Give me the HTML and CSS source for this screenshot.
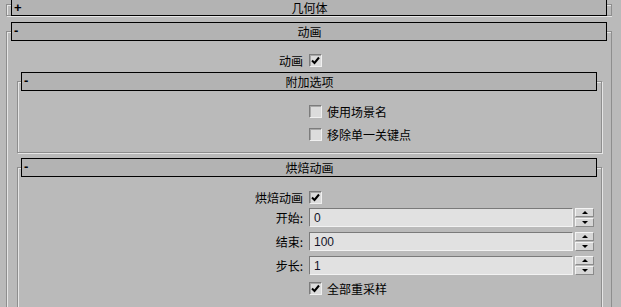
FILE: index.html
```html
<!DOCTYPE html>
<html lang="zh-CN">
<head>
    <meta charset="UTF-8">
    <title>动画</title>
    <link rel="stylesheet" href="styles.css">
</head>
<body>
    <div class="panel">

        <div class="rollout closed">
            <div class="rollout-head"><span class="toggle">+</span><span class="title">几何体</span></div>
        </div>

        <div class="rollout outer">
            <div class="rollout-head"><span class="toggle">-</span><span class="title">动画</span></div>

            <div class="form-row check-row first-row">
                <label class="label">动画</label>
                <span class="checkbox checked"><svg viewBox="0 0 9 9"><path d="M1 4.5 L3.5 7 L8 1.5" /></svg></span>
            </div>

            <div class="rollout inner extra">
                <div class="rollout-head"><span class="toggle">-</span><span class="title">附加选项</span></div>
                <div class="option-list">
                    <div class="option"><span class="checkbox"></span><span>使用场景名</span></div>
                    <div class="option"><span class="checkbox"></span><span>移除单一关键点</span></div>
                </div>
            </div>

            <div class="rollout inner bake">
                <div class="rollout-head"><span class="toggle">-</span><span class="title">烘焙动画</span></div>

                <div class="form-row check-row">
                    <label class="label">烘焙动画</label>
                    <span class="checkbox checked"><svg viewBox="0 0 9 9"><path d="M1 4.5 L3.5 7 L8 1.5" /></svg></span>
                </div>

                <div class="form-row spin-row">
                    <label class="label">开始:</label>
                    <div class="spinner">
                        <div class="field">0</div>
                        <div class="arrows"><span class="up"></span><span class="down"></span></div>
                    </div>
                </div>
                <div class="form-row spin-row">
                    <label class="label">结束:</label>
                    <div class="spinner">
                        <div class="field">100</div>
                        <div class="arrows"><span class="up"></span><span class="down"></span></div>
                    </div>
                </div>
                <div class="form-row spin-row">
                    <label class="label">步长:</label>
                    <div class="spinner">
                        <div class="field">1</div>
                        <div class="arrows"><span class="up"></span><span class="down"></span></div>
                    </div>
                </div>

                <div class="form-row check-row resample">
                    <span></span>
                    <div class="option"><span class="checkbox checked"><svg viewBox="0 0 9 9"><path d="M1 4.5 L3.5 7 L8 1.5" /></svg></span><span>全部重采样</span></div>
                </div>
            </div>
        </div>

    </div>
</body>
</html>
```

FILE: styles.css
```css
body {
    margin: 0;
    background-color: #bababa;
    color: #000;
    font-family: "Noto Sans CJK SC", "Liberation Sans", sans-serif;
    font-size: 12px;
    overflow: hidden;
}
.panel {
    padding: 4px 0 0 6px;
    width: 606px;
    height: 303px;
    overflow: hidden;
}

/* rollout frames (etched border) */
.rollout {
    border: 1px solid #8e8e8e;
    box-shadow: inset 1px 1px 0 #e6e6e6, 1px 1px 0 #e6e6e6;
}
.rollout-head {
    position: relative;
    height: 17px;
    border: 1px solid #000;
    background-color: #b3b3b3;
    display: flex;
    align-items: center;
    justify-content: center;
    line-height: 17px;
}
.toggle {
    position: absolute;
    left: 2px;
    top: -1px;
    font-family: "Liberation Sans", sans-serif;
    font-weight: bold;
    font-size: 13px;
}
.title {
    margin-left: 1px;
}

.closed .rollout-head {
    margin: -8px 4px -1px 4px;
    padding-top: 2px;
    height: 15px;
}
.closed .toggle {
    top: 1px;
}

.outer {
    margin-top: 15px;
    height: 300px;
    padding: 0 9px 0 10px;
}
.outer > .rollout-head {
    margin: -10px -5px 0 -6px;
}

.inner {
    margin-top: 16px;
}
.inner > .rollout-head {
    margin: -10px 4px 0 3px;
}
.extra {
    padding-bottom: 11px;
}
.bake {
    margin-top: 14px;
    height: 150px;
}

/* form rows */
.form-row {
    display: grid;
    grid-template-columns: 285px auto;
    column-gap: 6px;
    align-items: center;
}
.label {
    text-align: right;
}
.check-row {
    height: 13px;
    margin-top: 12px;
}
.first-row {
    margin-top: 11px;
    grid-template-columns: 286px auto;
}
.spin-row {
    height: 19px;
    margin-top: 5px;
}
.check-row + .spin-row {
    margin-top: 6px;
}
.resample {
    margin-top: 7px;
}

.option-list {
    display: flex;
    flex-direction: column;
    gap: 10px;
    padding: 14px 0 0 291px;
}
.option {
    display: flex;
    align-items: center;
    gap: 5px;
    height: 13px;
}

/* checkbox */
.checkbox {
    width: 11px;
    height: 11px;
    border: 1px solid;
    border-color: #7c7c7c #f0f0f0 #f0f0f0 #7c7c7c;
    background-color: #dcdcdc;
    box-shadow: inset 1px 1px 0 #a8a8a8;
    display: flex;
    align-items: center;
    justify-content: center;
}
.checkbox svg {
    width: 9px;
    height: 9px;
}
.checkbox path {
    fill: none;
    stroke: #000;
    stroke-width: 2;
}

/* spinner */
.spinner {
    display: flex;
    gap: 1px;
    height: 19px;
}
.field {
    width: 258px;
    height: 17px;
    border: 1px solid;
    border-color: #7a7a7a #f2f2f2 #f2f2f2 #7a7a7a;
    background-color: #e1e1e1;
    font-family: "Liberation Sans", sans-serif;
    font-size: 12px;
    line-height: 18px;
    padding-left: 4px;
    color: #141428;
}
.arrows {
    display: flex;
    flex-direction: column;
    gap: 1px;
    margin-left: 1px;
}
.arrows span {
    width: 17px;
    height: 7px;
    border: 1px solid;
    border-color: #f4f4f4 #8a8a8a #8a8a8a #f4f4f4;
    background-color: #d6d6d6;
    display: flex;
    align-items: center;
    justify-content: center;
}
.arrows span::after {
    content: "";
    border-left: 3px solid transparent;
    border-right: 3px solid transparent;
}
.arrows .up::after {
    border-bottom: 3px solid #000;
}
.arrows .down::after {
    border-top: 3px solid #000;
}
```
